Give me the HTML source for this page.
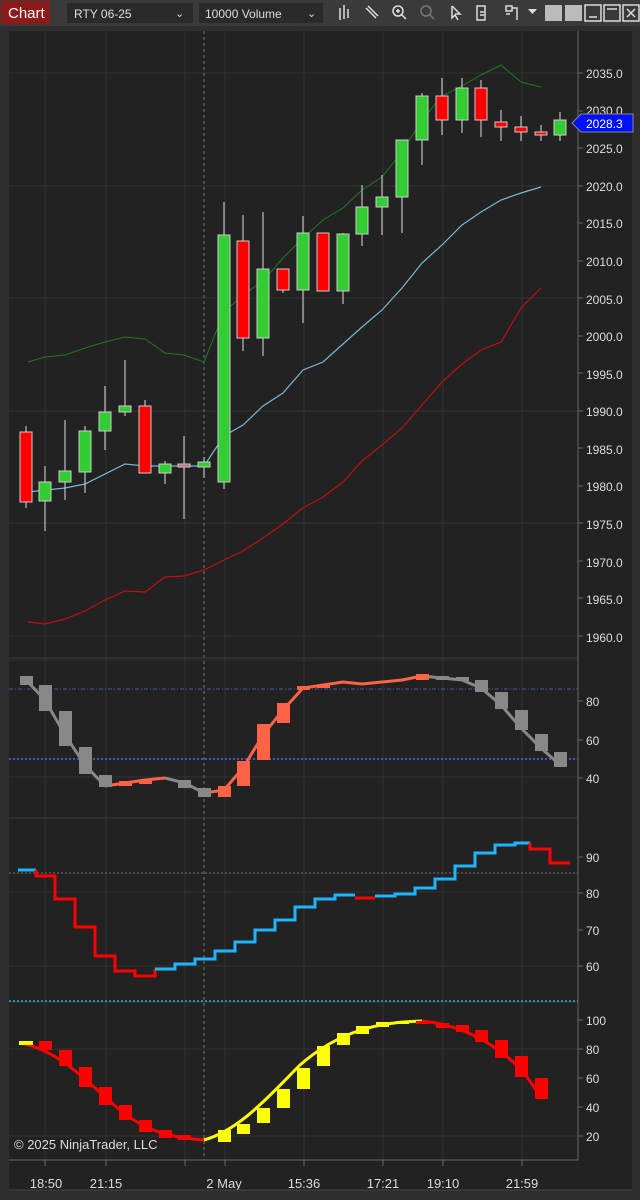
<!DOCTYPE html>
<html><head><meta charset="utf-8"><style>
body{margin:0;background:#2e2e2e;width:640px;height:1200px;overflow:hidden;font-family:"Liberation Sans",sans-serif}
svg{position:absolute;left:0;top:0}
</style></head><body>
<svg width="640" height="1200" viewBox="0 0 640 1200" font-family="Liberation Sans, sans-serif">
<rect width="640" height="1200" fill="#2e2e2e"/>
<rect width="640" height="26" fill="#3a3a3a"/>
<rect x="1" y="1" width="49" height="23" fill="#8c1a1a"/>
<text x="8" y="18" fill="#fff" font-size="15">Chart</text>
<rect x="67" y="3" width="126" height="20" fill="#2a2a2a"/>
<text x="74" y="18" fill="#ddd" font-size="12">RTY 06-25</text>
<text x="175" y="17" fill="#ddd" font-size="11">⌄</text>
<rect x="199" y="3" width="124" height="20" fill="#2a2a2a"/>
<text x="205" y="18" fill="#ddd" font-size="12">10000 Volume</text>
<text x="307" y="17" fill="#ddd" font-size="11">⌄</text>
<g stroke="#ddd" stroke-width="1.5" fill="none">
<path d="M340 8v12M344 5v14M348 9v9"/>
<path d="M366 8l10 10M368 6l10 10"/>
<circle cx="398" cy="11" r="5"/><path d="M401 14l5 5M396 11h4M398 9v4"/>
<circle cx="426" cy="11" r="5" stroke="#777"/><path d="M429 14l5 5" stroke="#777"/>
<path d="M452 6v12l3-3 3 5M452 6l8 8h-5"/>
<path d="M477 6h8v14h-8zM480 12h4M480 15h4"/>
<path d="M506 6h6v5h-6zM512 8h5v12M506 14h4"/>
</g>
<path d="M528 9h9l-4.5 5z" fill="#ddd"/>
<rect x="545" y="5" width="17" height="16" fill="#bbb"/><rect x="565" y="5" width="17" height="16" fill="#bbb"/>
<g stroke="#ddd" fill="none" stroke-width="1.5"><rect x="585" y="5" width="16" height="16"/><path d="M589 17h8"/><rect x="604" y="5" width="16" height="16"/><path d="M607 9h10"/><rect x="623" y="5" width="16" height="16"/><path d="M627 9l8 8M635 9l-8 8"/></g>
<rect x="9" y="31" width="569" height="1129" fill="#222"/>
<rect x="578" y="31" width="54" height="1159" fill="#222"/>
<rect x="9" y="1160" width="569" height="30" fill="#222"/>
<g stroke="#333" stroke-width="1">
<path d="M45 31V1160M106 31V1160M185 31V1160M225 31V1160M304 31V1160M383 31V1160M443 31V1160M522 31V1160"/>
<path d="M9 73H578M9 186H578M9 298H578M9 411H578M9 523H578M9 636H578M9 660H578M9 777H578M9 892H578M9 966H578M9 1049H578M9 1136H578"/>
</g>
<path d="M204 31V1160" stroke="#777" stroke-dasharray="3,3"/>
<path d="M9 658H578M9 818H578M9 1002H578" stroke="#3a3a3a"/>
<path d="M578 31V1160H9" stroke="#666" fill="none"/>
<g fill="#ddd" font-size="12">
<text x="586" y="78">2035.0</text><text x="586" y="115">2030.0</text><text x="586" y="153">2025.0</text><text x="586" y="191">2020.0</text><text x="586" y="228">2015.0</text><text x="586" y="266">2010.0</text><text x="586" y="304">2005.0</text><text x="586" y="341">2000.0</text><text x="586" y="379">1995.0</text><text x="586" y="416">1990.0</text><text x="586" y="454">1985.0</text><text x="586" y="491">1980.0</text><text x="586" y="529">1975.0</text><text x="586" y="567">1970.0</text><text x="586" y="604">1965.0</text><text x="586" y="642">1960.0</text>
<text x="586" y="706">80</text><text x="586" y="745">60</text><text x="586" y="783">40</text>
<text x="586" y="862">90</text><text x="586" y="898">80</text><text x="586" y="935">70</text><text x="586" y="971">60</text>
<text x="586" y="1025">100</text><text x="586" y="1054">80</text><text x="586" y="1083">60</text><text x="586" y="1112">40</text><text x="586" y="1141">20</text>
</g>
<g stroke="#666"><path d="M578 73h5M578 111h5M578 148h5M578 186h5M578 223h5M578 261h5M578 298h5M578 336h5M578 373h5M578 411h5M578 448h5M578 486h5M578 523h5M578 561h5M578 598h5M578 636h5M578 701h5M578 740h5M578 778h5M578 857h5M578 893h5M578 930h5M578 966h5M578 1020h5M578 1049h5M578 1078h5M578 1107h5M578 1136h5"/></g>
<path d="M572 123l9-9h52v18h-52z" fill="#0010ff" stroke="#888"/>
<text x="586" y="128" fill="#fff" font-size="12">2028.3</text>
<!-- bands -->
<polyline fill="none" stroke="#1f7a1f" stroke-width="1" points="28,362 45,357 65,355 85,348 105,342 125,337 145,339 165,353 184,355 204,362 224,312 243,295 263,281 283,258 303,238 323,220 343,208 362,190 382,177 402,152 422,120 442,96 462,86 481,75 501,65 521,82 541,87"/>
<polyline fill="none" stroke="#7ab8d8" stroke-width="1.2" points="28,492 65,488 85,484 125,464 145,466 204,466 224,436 243,425 263,406 283,393 303,370 323,362 343,344 362,327 382,310 402,288 422,263 442,245 462,225 481,212 501,200 521,193 541,187"/>
<polyline fill="none" stroke="#c01010" stroke-width="1.2" points="28,622 45,624 65,619 85,611 105,600 125,591 145,592 165,577 184,576 204,570 224,560 243,551 263,538 283,524 303,508 323,497 343,482 362,461 382,445 402,428 422,405 442,382 462,364 481,350 501,342 521,308 541,288"/>
<!-- candles -->
<g stroke="#ddd" stroke-width="1">
<path d="M26 426V508M45 466V531M65 420V500M85 426V493M105 386V450M125 360V416M145 400V473M165 461V484M184 436V519M204 457V478M224 202V489M243 215V351M263 212V356M283 269V293M303 216V323M323 233V291M343 233V304M362 185V246M382 175V235M402 140V233M422 93V165M442 78V135M462 78V133M481 80V137M501 110V141M521 116V141M541 125V141M560 112V141"/>
<g stroke="#ccc">
<rect x="20" y="432" width="12" height="70" fill="#f00"/>
<rect x="39" y="482" width="12" height="19" fill="#33cc33"/>
<rect x="59" y="471" width="12" height="11" fill="#33cc33"/>
<rect x="79" y="431" width="12" height="41" fill="#33cc33"/>
<rect x="99" y="412" width="12" height="19" fill="#33cc33"/>
<rect x="119" y="406" width="12" height="6" fill="#33cc33"/>
<rect x="139" y="406" width="12" height="67" fill="#f00"/>
<rect x="159" y="464" width="12" height="9" fill="#33cc33"/>
<rect x="178" y="464" width="12" height="3" fill="#d06070"/>
<rect x="198" y="462" width="12" height="5" fill="#33cc33"/>
<rect x="218" y="235" width="12" height="247" fill="#33cc33"/>
<rect x="237" y="241" width="12" height="97" fill="#f00"/>
<rect x="257" y="269" width="12" height="69" fill="#33cc33"/>
<rect x="277" y="269" width="12" height="21" fill="#f00"/>
<rect x="297" y="233" width="12" height="57" fill="#33cc33"/>
<rect x="317" y="233" width="12" height="58" fill="#f00"/>
<rect x="337" y="234" width="12" height="57" fill="#33cc33"/>
<rect x="356" y="207" width="12" height="27" fill="#33cc33"/>
<rect x="376" y="197" width="12" height="10" fill="#33cc33"/>
<rect x="396" y="140" width="12" height="57" fill="#33cc33"/>
<rect x="416" y="96" width="12" height="44" fill="#33cc33"/>
<rect x="436" y="96" width="12" height="24" fill="#f00"/>
<rect x="456" y="88" width="12" height="32" fill="#33cc33"/>
<rect x="475" y="88" width="12" height="32" fill="#f00"/>
<rect x="495" y="122" width="12" height="5" fill="#f00"/>
<rect x="515" y="127" width="12" height="5" fill="#f00"/>
<rect x="535" y="132" width="12" height="3" fill="#f00"/>
<rect x="554" y="120" width="12" height="15" fill="#33cc33"/>
</g></g>
<!-- panel 2 -->
<path d="M9 689H578" stroke="#3b5bb8" stroke-dasharray="4,2,1,2"/>
<path d="M9 759H578" stroke="#3b5bb8" stroke-width="2" stroke-dasharray="2,2"/>
<polyline fill="none" stroke="#888" stroke-width="3" points="26,680 45,700 65,735 85,765 105,786"/>
<polyline fill="none" stroke="#ff6347" stroke-width="3" points="105,786 145,780 165,778"/>
<polyline fill="none" stroke="#888" stroke-width="3" points="165,778 185,783 204,793"/>
<polyline fill="none" stroke="#ff6347" stroke-width="3" points="204,793 224,790 243,768 263,735 283,710 303,688 343,682 362,684 402,680 422,676"/>
<polyline fill="none" stroke="#888" stroke-width="3" points="422,676 462,680 481,688 501,705 521,728 541,748 560,765"/>
<g fill="#888"><rect x="20" y="676" width="13" height="9"/><rect x="39" y="685" width="13" height="26"/><rect x="59" y="711" width="13" height="35"/><rect x="79" y="747" width="13" height="27"/><rect x="99" y="775" width="13" height="12"/><rect x="178" y="780" width="13" height="8"/><rect x="198" y="788" width="13" height="9"/><rect x="436" y="676" width="13" height="4"/><rect x="456" y="677" width="13" height="4"/><rect x="475" y="680" width="13" height="12"/><rect x="495" y="692" width="13" height="17"/><rect x="515" y="710" width="13" height="20"/><rect x="535" y="734" width="13" height="17"/><rect x="554" y="752" width="13" height="15"/></g>
<g fill="#ff6347"><rect x="119" y="781" width="13" height="5"/><rect x="139" y="780" width="13" height="4"/><rect x="218" y="786" width="13" height="11"/><rect x="237" y="761" width="13" height="25"/><rect x="257" y="724" width="13" height="36"/><rect x="277" y="703" width="13" height="20"/><rect x="297" y="686" width="13" height="4"/><rect x="317" y="685" width="13" height="3"/><rect x="416" y="674" width="13" height="6"/></g>
<!-- panel 3 -->
<path d="M9 873H578" stroke="#777" stroke-dasharray="2,2"/>
<path d="M9 1001H578" stroke="#2aa8d8" stroke-width="1.5" stroke-dasharray="2,2"/>
<polyline fill="none" stroke="#1eb4ff" stroke-width="3" points="18,870 36,870"/>
<polyline fill="none" stroke="#f00" stroke-width="3" points="36,870 36,876 55,876 55,899 75,899 75,927 95,927 95,956 115,956 115,971 135,971 135,976 155,976 155,969"/>
<polyline fill="none" stroke="#1eb4ff" stroke-width="3" points="155,969 175,969 175,964 195,964 195,959 215,959 215,951 235,951 235,942 255,942 255,930 275,930 275,920 295,920 295,907 315,907 315,899 335,899 335,895 355,895"/>
<polyline fill="none" stroke="#f00" stroke-width="3" points="355,898 375,898"/>
<polyline fill="none" stroke="#1eb4ff" stroke-width="3" points="375,896 395,896 395,894 415,894 415,888 435,888 435,879 455,879 455,866 475,866 475,853 495,853 495,845 515,845 515,843 530,843"/>
<polyline fill="none" stroke="#f00" stroke-width="3" points="530,843 530,849 550,849 550,863 570,863"/>
<!-- panel 4 -->
<path d="M20 1043 C60 1050 90 1085 120 1110 C150 1135 180 1138 204 1140" fill="none" stroke="#f00" stroke-width="3"/>
<path d="M204 1140 C240 1130 270 1095 300 1065 C340 1030 380 1022 422 1021" fill="none" stroke="#ff0" stroke-width="3"/>
<path d="M422 1021 C460 1025 490 1040 520 1068 C530 1080 536 1090 541 1098" fill="none" stroke="#f00" stroke-width="3"/>
<g fill="#ff0"><rect x="19" y="1041" width="14" height="4"/><rect x="218" y="1130" width="13" height="12"/><rect x="237" y="1124" width="13" height="10"/><rect x="257" y="1108" width="13" height="15"/><rect x="277" y="1089" width="13" height="19"/><rect x="297" y="1068" width="13" height="21"/><rect x="317" y="1046" width="13" height="20"/><rect x="337" y="1033" width="13" height="12"/><rect x="356" y="1026" width="13" height="8"/><rect x="376" y="1022" width="13" height="5"/><rect x="396" y="1021" width="13" height="3"/></g>
<g fill="#f00"><rect x="39" y="1041" width="13" height="9"/><rect x="59" y="1050" width="13" height="16"/><rect x="79" y="1067" width="13" height="20"/><rect x="99" y="1087" width="13" height="18"/><rect x="119" y="1105" width="13" height="15"/><rect x="139" y="1120" width="13" height="12"/><rect x="159" y="1130" width="13" height="8"/><rect x="178" y="1135" width="13" height="5"/><rect x="416" y="1021" width="13" height="3"/><rect x="436" y="1023" width="13" height="5"/><rect x="456" y="1025" width="13" height="7"/><rect x="475" y="1030" width="13" height="12"/><rect x="495" y="1040" width="13" height="18"/><rect x="515" y="1056" width="13" height="21"/><rect x="535" y="1078" width="13" height="21"/></g>
<text x="14" y="1149" fill="#ddd" font-size="13">© 2025 NinjaTrader, LLC</text>
<g stroke="#666"><path d="M45 1160v6M106 1160v6M185 1160v6M225 1160v6M304 1160v6M383 1160v6M443 1160v6M522 1160v6"/></g>
<g fill="#ddd" font-size="13" text-anchor="middle">
<text x="46" y="1188">18:50</text><text x="106" y="1188">21:15</text><text x="224" y="1188">2 May</text><text x="304" y="1188">15:36</text><text x="383" y="1188">17:21</text><text x="443" y="1188">19:10</text><text x="522" y="1188">21:59</text>
</g>
<path d="M9 1190H632" stroke="#444"/>
</svg>
</body></html>
